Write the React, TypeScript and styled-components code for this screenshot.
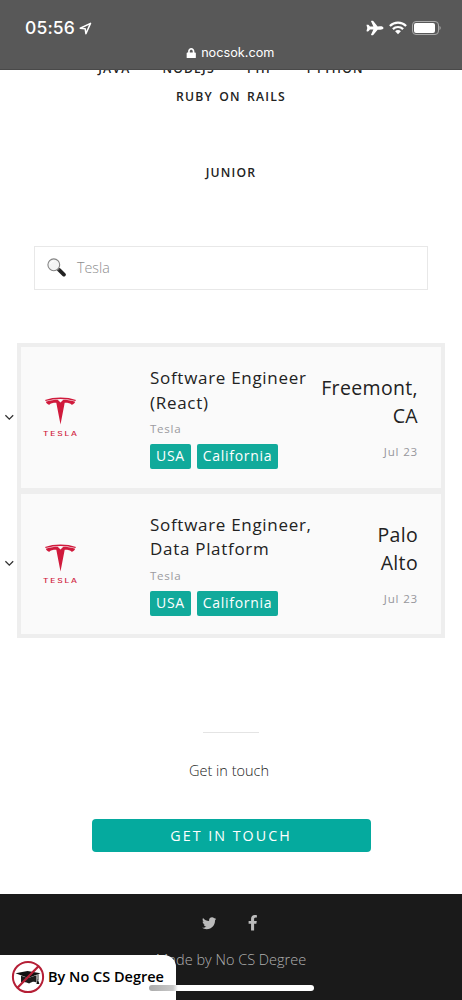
import React from 'react';
import styled, { createGlobalStyle } from 'styled-components';
import { FaTwitter, FaFacebookF, FaLock } from 'react-icons/fa';
import { IoAirplane } from 'react-icons/io5';

const GlobalStyle = createGlobalStyle`
  * { box-sizing: border-box; }
  body { margin: 0; background: #fff; font-family: 'Open Sans', 'Noto Sans', sans-serif; color: #222; }
`;

const Screen = styled.div`
  position: relative;
  width: 462px;
  height: 1000px;
  overflow: hidden;
  display: flex;
  flex-direction: column;
  background: #fff;
`;

const PhoneHeader = styled.header`
  position: absolute;
  inset: 0 0 auto 0;
  height: 70px;
  background: #585858;
  border-bottom: 1px solid #494949;
  color: #fff;
  font-family: Inter, 'Liberation Sans', sans-serif;
  z-index: 2;
`;

const StatusBar = styled.div`
  display: flex;
  justify-content: space-between;
  align-items: center;
  height: 38px;
  padding: 18px 21px 0 25px;
`;

const Clock = styled.div`
  display: flex;
  align-items: center;
  gap: 4px;
  font-size: 17.5px;
  font-weight: 500;
  line-height: 20px;
  letter-spacing: 0.15px;
`;

const StatusIcons = styled.div`
  display: flex;
  align-items: center;
  gap: 5px;
`;

const Address = styled.div`
  display: flex;
  justify-content: center;
  align-items: center;
  gap: 5px;
  height: 30px;
  padding-right: 2px;
  font-size: 12.7px;
  line-height: 20px;
`;

const Filters = styled.nav`
  display: flex;
  flex-direction: column;
  padding-top: 57px;
  font-size: 12.2px;
  font-weight: 600;
  line-height: 24px;
  letter-spacing: 1.2px;
  word-spacing: 2px;
`;

const FilterRow = styled.div<{ $top?: number; $gap?: number }>`
  display: flex;
  justify-content: center;
  gap: ${(p) => p.$gap ?? 0}px;
  margin-top: ${(p) => p.$top ?? 0}px;
`;

const SearchBox = styled.div`
  display: flex;
  align-items: center;
  flex: none;
  gap: 11px;
  width: 394px;
  height: 44px;
  margin: 61px 0 0 34px;
  padding: 0 0 1px 12px;
  border: 1px solid #e8e8e8;
  font-size: 14.3px;
  font-weight: 300;
  color: #8e8e8e;
`;

const JobList = styled.main`
  display: flex;
  flex-direction: column;
  flex: none;
  gap: 6px;
  width: 428px;
  height: 295px;
  margin: 53px 0 0 17px;
  padding: 4px;
  background: #eee;
`;

const JobRow = styled.article`
  display: flex;
  flex: 1;
  background: #fafafa;
  letter-spacing: 0.8px;
`;

const ChevronSlot = styled.div`
  display: flex;
  flex: none;
  align-items: center;
  width: 10px;
  margin-left: -17px;
`;

const LogoColumn = styled.div`
  display: flex;
  flex: none;
  align-items: center;
  width: 136px;
  padding-left: 28px;
`;

const Details = styled.div`
  flex: none;
  width: 166px;
  padding-top: 19px;
`;

const JobTitle = styled.h2`
  margin: 0;
  font-size: 17px;
  font-weight: 400;
  line-height: 24.6px;
  letter-spacing: 0.7px;
  white-space: nowrap;
`;

const Company = styled.div`
  margin-top: 6px;
  font-size: 11.6px;
  line-height: 16px;
  letter-spacing: 0.7px;
  color: #9b9b9f;
`;

const Tags = styled.div`
  display: flex;
  gap: 6px;
  margin-top: 7px;
`;

const Tag = styled.span`
  height: 25px;
  padding: 0 6px;
  border-radius: 2px;
  background: #11aa9b;
  color: #fff;
  font-size: 14px;
  line-height: 24px;
  letter-spacing: 0.7px;
`;

const Place = styled.div`
  display: flex;
  flex-direction: column;
  align-items: flex-end;
  flex: 1;
  padding: 27px 23px 0 0;
  text-align: right;
`;

const City = styled.div`
  font-size: 19.5px;
  line-height: 28px;
  letter-spacing: 0.35px;
  white-space: nowrap;
`;

const Posted = styled.time`
  margin-top: 14px;
  font-size: 11.6px;
  line-height: 16px;
  color: #97979d;
`;

const Contact = styled.section`
  display: flex;
  flex-direction: column;
  align-items: center;
  height: 256px;
  padding-top: 94px;
`;

const Divider = styled.hr`
  width: 56px;
  height: 1px;
  margin: 0;
  border: 0;
  background: #e4e4e4;
`;

const ContactLabel = styled.p`
  margin: 27px 0 38px;
  padding-right: 4px;
  font-size: 14.5px;
  font-weight: 300;
  line-height: 21px;
`;

const ContactButton = styled.button`
  width: 279px;
  height: 33px;
  padding: 0;
  border: 0;
  border-radius: 4px;
  background: #05aa9e;
  color: #fff;
  font: 400 14.3px 'Open Sans', sans-serif;
  letter-spacing: 2px;
`;

const Footer = styled.footer`
  display: flex;
  flex-direction: column;
  align-items: center;
  flex: 1;
  background: #1a1a1a;
  color: #b0b0b0;
  font-size: 14.5px;
  font-weight: 300;
`;

const Social = styled.div`
  display: flex;
  align-items: center;
  gap: 29px;
  height: 16px;
  margin: 21px 0 19px;
  color: #bbb;
`;

const Badge = styled.aside`
  position: absolute;
  left: 0;
  bottom: 0;
  display: flex;
  align-items: center;
  gap: 3px;
  width: 176px;
  height: 45px;
  padding: 0 0 2px 11px;
  border-top-right-radius: 12px;
  background: #fff;
  color: #000;
  font-size: 14.5px;
  font-weight: 600;
  white-space: nowrap;
`;

const HomeIndicator = styled.div`
  position: absolute;
  left: 149px;
  bottom: 9px;
  width: 165px;
  height: 6px;
  border-radius: 3px;
  background: linear-gradient(90deg, #aaa 0, #c8c8c8 24px, #fff 29px);
`;

const LocationArrow = () => (
  <svg width="13" height="13" viewBox="0 0 13 13" fill="none" stroke="#fff" strokeWidth="1.5" strokeLinejoin="round">
    <path d="M1.2 6.2 11.5 1.4 6.9 11.7 6.2 6.8Z" />
  </svg>
);

const Wifi = () => (
  <svg width="18" height="14" viewBox="0 0 18 14" fill="none" stroke="#fff" strokeWidth="2.2">
    <path d="M.9 5C5.4.5 12.6.5 17.1 5M3.9 8.1c2.8-2.8 7.4-2.8 10.2 0" />
    <path d="M9 13.2 6.1 10.3c1.6-1.6 4.2-1.6 5.8 0Z" fill="#fff" stroke="none" />
  </svg>
);

const Battery = () => (
  <svg width="29" height="14" viewBox="0 0 29 14">
    <rect x=".5" y=".5" width="26" height="13" rx="3.5" fill="none" stroke="#aaa" />
    <rect x="2" y="2" width="21" height="10" rx="2" fill="#fff" />
    <path d="M27.5 5v4c1.6-.7 1.6-3.3 0-4Z" fill="#aaa" />
  </svg>
);

const Magnifier = () => (
  <svg width="19" height="19" viewBox="0 0 19 19">
    <path d="m12.1 11.9 4.8 4.7" stroke="#222" strokeWidth="3.8" strokeLinecap="round" />
    <path d="m10.5 10.4 1.6 1.6" stroke="#555" strokeWidth="1.8" />
    <circle cx="6.8" cy="6.8" r="5.9" fill="#f4f5f5" stroke="#858585" strokeWidth="1.1" />
    <path d="M3.5 6a3.5 3.5 0 0 1 3.4-2.8" stroke="#fff" fill="none" />
  </svg>
);

const Chevron = () => (
  <svg width="10" height="7" viewBox="0 0 10 7" fill="none" stroke="#333" strokeWidth="1.3">
    <path d="m1.4 1.2 3.9 3.9 3.9-3.9" />
  </svg>
);

const TeslaLogo = () => (
  <svg width="37" height="40" viewBox="0 0 37 40" fill="#d01a3c">
    <path d="M3 3C12-.3 25-.3 34 3L33.3 4C24 1.2 13 1.2 3.7 4Z" />
    <path d="M3.8 4.8C8.3 3.3 13 2.8 15.7 2.8L18.5 5.4 21.3 2.8C24 2.8 28.7 3.3 33.2 4.8 32.5 6.5 31.2 7.5 29.6 7.8 28.4 6.3 26.3 5.8 22.7 5.8L18.5 27.4 14.3 5.8C10.7 5.8 8.6 6.3 7.4 7.8 5.8 7.5 4.5 6.5 3.8 4.8Z" />
    <text x="0" y="39" transform="translate(1 0) scale(1.45 1)" fontFamily="Inter" fontSize="5.8" fontWeight="500" textLength="24.3" lengthAdjust="spacing">TESLA</text>
  </svg>
);

const NoDegreeLogo = () => (
  <svg width="34" height="34" viewBox="0 0 34 34">
    <path d="m4.5 13.3 12-2.3 13 2.2-12.2 4.7Z" fill="#111" />
    <path d="M10 15.8 17.3 18l8.2-2.8v7.2c-2.5-1-4.5-.7-7.4 1.2-2.6-1.6-5.3-2-8.1-1Z" fill="#1c1c1c" />
    <path d="M27 14.2V20" stroke="#111" strokeWidth=".9" />
    <path d="m26.8 19 1.6 5h-3Z" fill="#111" />
    <circle cx="17" cy="17" r="15.1" fill="none" stroke="#b51f36" strokeWidth="2" />
    <path d="M27.5 6.3 6.5 27.7" stroke="#b51f36" strokeWidth="2.3" />
  </svg>
);

interface Job {
  title: string[];
  city: string[];
}

const jobs: Job[] = [
  { title: ['Software Engineer', '(React)'], city: ['Freemont,', 'CA'] },
  { title: ['Software Engineer,', 'Data Platform'], city: ['Palo', 'Alto'] },
];

export default function App() {
  return (
    <Screen>
      <GlobalStyle />
      <PhoneHeader>
        <StatusBar>
          <Clock>05:56 <LocationArrow /></Clock>
          <StatusIcons>
            <IoAirplane size={18} />
            <Wifi />
            <Battery />
          </StatusIcons>
        </StatusBar>
        <Address><FaLock size={10.5} /><span>nocsok.com</span></Address>
      </PhoneHeader>
      <Filters>
        <FilterRow $gap={32}>
          <span>JAVA</span><span>NODEJS</span><span>PHP</span><span>PYTHON</span>
        </FilterRow>
        <FilterRow $top={4}><span>RUBY ON RAILS</span></FilterRow>
        <FilterRow $top={52}><span>JUNIOR</span></FilterRow>
      </Filters>
      <SearchBox><Magnifier />Tesla</SearchBox>
      <JobList>
        {jobs.map((job) => (
          <JobRow key={job.title.join(' ')}>
            <ChevronSlot><Chevron /></ChevronSlot>
            <LogoColumn><TeslaLogo /></LogoColumn>
            <Details>
              <JobTitle>{job.title[0]}<br />{job.title[1]}</JobTitle>
              <Company>Tesla</Company>
              <Tags><Tag>USA</Tag><Tag>California</Tag></Tags>
            </Details>
            <Place>
              <City>{job.city[0]}<br />{job.city[1]}</City>
              <Posted>Jul 23</Posted>
            </Place>
          </JobRow>
        ))}
      </JobList>
      <Contact>
        <Divider />
        <ContactLabel>Get in touch</ContactLabel>
        <ContactButton>GET IN TOUCH</ContactButton>
      </Contact>
      <Footer>
        <Social><FaTwitter size={14.5} /><FaFacebookF size={15.5} /></Social>
        <span>Made by No CS Degree</span>
      </Footer>
      <Badge><NoDegreeLogo />By No CS Degree</Badge>
      <HomeIndicator />
    </Screen>
  );
}
